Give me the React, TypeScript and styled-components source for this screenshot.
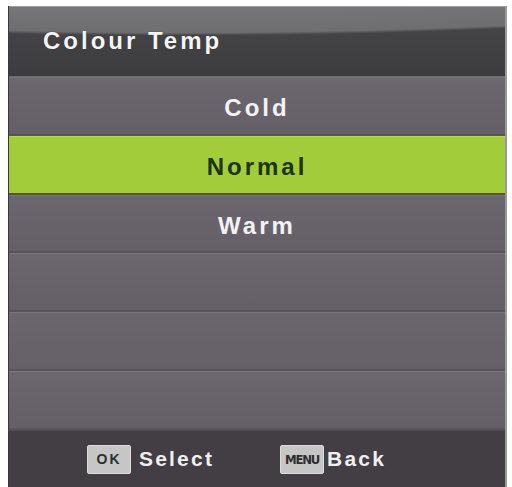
import styled, { createGlobalStyle } from "styled-components";

const GlobalStyle = createGlobalStyle`
  html, body {
    margin: 0;
    padding: 0;
    background: #ffffff;
  }
  body {
    font-family: "Liberation Sans", Arial, sans-serif;
  }
`;

const options = ["Cold", "Normal", "Warm", "", "", ""];
const selected = 1;

const App = () => {
  return (
    <>
      <GlobalStyle />
      <Page>
        <Panel>
          <Header>
            <HeaderTitle>Colour Temp</HeaderTitle>
          </Header>

          <List>
            {options.map((label, i) => (
              <Row key={i} $active={i === selected}>
                {label}
              </Row>
            ))}
          </List>

          <Footer>
            <Hint $gap={8}>
              <KeyBadge>OK</KeyBadge>
              <HintLabel>Select</HintLabel>
            </Hint>
            <Hint $gap={3}>
              <KeyBadge $narrow>MENU</KeyBadge>
              <HintLabel>Back</HintLabel>
            </Hint>
          </Footer>
        </Panel>
      </Page>
    </>
  );
};

export default App;

const Page = styled.div`
  width: 512px;
  height: 487px;
  padding: 6px 5px 0 8px;
  box-sizing: border-box;
  overflow: hidden;
`;

const Panel = styled.div`
  width: 499px;
  height: 481px;
  display: flex;
  flex-direction: column;
  background: #67636a;
  border-left: 1px solid #3a383c;
  border-right: 2px solid #9a989c;
  box-sizing: border-box;
`;

const Header = styled.div`
  height: 71px;
  flex-shrink: 0;
  display: flex;
  align-items: center;
  padding-left: 34px;
  box-sizing: border-box;
  border-top: 1px solid #9c9c9c;
  border-bottom: 1px solid #6c6c6e;
  background:
    radial-gradient(
      ellipse 1500px 300px at 35% -270px,
      #8a8a8c 0%,
      #7c7c7e 85%,
      #6e6e70 98.5%,
      rgba(0, 0, 0, 0) 99.5%
    ),
    linear-gradient(#48484a, #3c3c3e);
`;

const HeaderTitle = styled.div`
  color: #f4f4f4;
  font-size: 24px;
  font-weight: 700;
  letter-spacing: 3px;
  text-shadow: 0 0 1px rgba(0, 0, 0, 0.6);
  margin-top: -2px;
`;

const List = styled.div`
  flex: 1;
  display: grid;
  grid-template-rows: repeat(6, 1fr);
`;

const Row = styled.div<{ $active?: boolean }>`
  display: flex;
  align-items: center;
  justify-content: center;
  padding-top: 4px;
  font-size: 24px;
  font-weight: 700;
  letter-spacing: 3px;
  color: ${(p) => (p.$active ? "#1c3410" : "#f2f2f2")};
  background: ${(p) =>
    p.$active ? "#a3cc3b" : "linear-gradient(#6b676e, #655f68)"};
  border-top: 1px solid ${(p) => (p.$active ? "#b4d65a" : "#7a767d")};
  border-bottom: 2px solid ${(p) => (p.$active ? "#56523b" : "#58545b")};
  box-sizing: border-box;
`;

const Footer = styled.div`
  height: 57px;
  flex-shrink: 0;
  display: flex;
  align-items: center;
  padding-left: 78px;
  gap: 66px;
  background: #423e44;
  border-top: 1px solid #514d53;
  box-sizing: border-box;
`;

const Hint = styled.div<{ $gap: number }>`
  display: flex;
  align-items: center;
  gap: ${(p) => p.$gap}px;
`;

const KeyBadge = styled.div<{ $narrow?: boolean }>`
  width: 44px;
  height: 29px;
  display: flex;
  align-items: center;
  justify-content: center;
  background: #c6c6c6;
  border: 1px solid #dcdcdc;
  border-radius: 2px;
  box-sizing: border-box;
  color: #2e2e2e;
  font-family: ${(p) =>
    p.$narrow
      ? '"DejaVu Sans Condensed", "Liberation Sans", sans-serif'
      : '"Liberation Sans", Arial, sans-serif'};
  font-size: ${(p) => (p.$narrow ? "13px" : "14px")};
  font-weight: 700;
  letter-spacing: ${(p) => (p.$narrow ? "-1.2px" : "2px")};
`;

const HintLabel = styled.div`
  color: #efefef;
  font-size: 21px;
  font-weight: 700;
  letter-spacing: 2.2px;
`;
